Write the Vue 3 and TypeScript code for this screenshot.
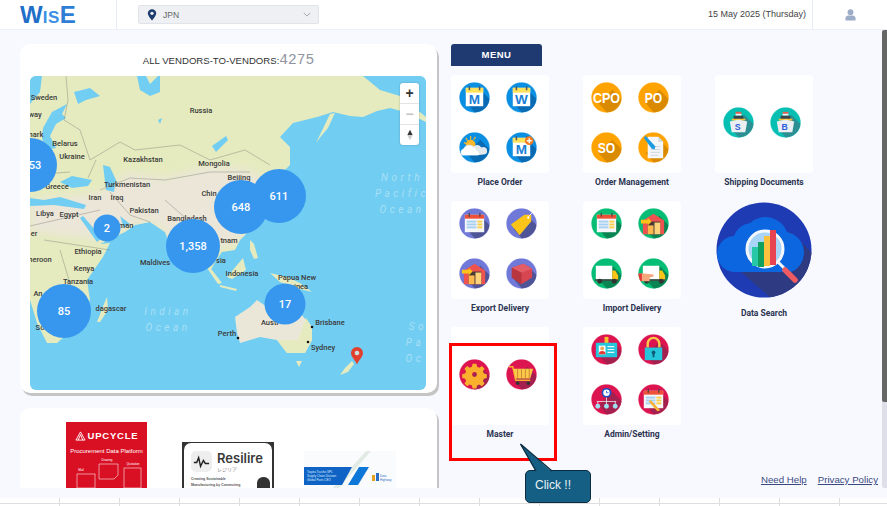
<script setup lang="ts">
interface MenuIcon {
  kind: string
  bg: string
  shade: string
  text?: string
}
interface MenuGroup {
  label: string
  icons: MenuIcon[]
  big?: boolean
}

const blue = { bg: '#0b8fe3', shade: '#0a6bb5' }
const orange = { bg: '#ffa300', shade: '#d98a00' }
const purple = { bg: '#7078d8', shade: '#4f5496' }
const green = { bg: '#05bd74', shade: '#0a8452' }
const crimson = { bg: '#dc1450', shade: '#a3204f' }
const teal = { bg: '#06bfb3', shade: '#2b8f93' }

// row by row, same order as the page
const menuGroups: MenuGroup[] = [
  {
    label: 'Place Order',
    icons: [
      { kind: 'cal', text: 'M', ...blue },
      { kind: 'cal', text: 'W', ...blue },
      { kind: 'weather', ...blue },
      { kind: 'calplus', text: 'M', ...blue }
    ]
  },
  {
    label: 'Order Management',
    icons: [
      { kind: 'badge', text: 'CPO', ...orange },
      { kind: 'badge', text: 'PO', ...orange },
      { kind: 'badge', text: 'SO', ...orange },
      { kind: 'doc', ...orange }
    ]
  },
  {
    label: 'Shipping Documents',
    icons: [
      { kind: 'ship', text: 'S', ...teal },
      { kind: 'ship', text: 'B', ...teal }
    ]
  },
  {
    label: 'Export Delivery',
    icons: [
      { kind: 'grid', ...purple },
      { kind: 'tag', ...purple },
      { kind: 'house', ...purple },
      { kind: 'box', ...purple }
    ]
  },
  {
    label: 'Import Delivery',
    icons: [
      { kind: 'grid', ...green },
      { kind: 'house', ...green },
      { kind: 'truck', ...green },
      { kind: 'hand', ...green }
    ]
  },
  { label: 'Data Search', icons: [], big: true },
  {
    label: 'Master',
    icons: [
      { kind: 'gear', ...crimson },
      { kind: 'cart', ...crimson }
    ]
  },
  {
    label: 'Admin/Setting',
    icons: [
      { kind: 'card', ...crimson },
      { kind: 'lock', ...crimson },
      { kind: 'org', ...crimson },
      { kind: 'calpen', ...crimson }
    ]
  }
]

const clusters = [
  { x: 30, y: 165, r: 27, n: '353' },
  { x: 107, y: 228, r: 13.5, n: '2' },
  { x: 193, y: 246, r: 27, n: '1,358' },
  { x: 241, y: 207, r: 27, n: '648' },
  { x: 279, y: 196, r: 27, n: '611' },
  { x: 64, y: 311, r: 27, n: '85' },
  { x: 285, y: 304, r: 20.5, n: '17' }
]

const places = [
  { x: 44, y: 100, t: 'Sweden' },
  { x: 35, y: 117, t: 'way' },
  { x: 36, y: 137, t: 'nark' },
  { x: 201, y: 113, t: 'Russia' },
  { x: 65, y: 146, t: 'Belarus' },
  { x: 72, y: 159, t: 'Ukraine' },
  { x: 143, y: 162, t: 'Kazakhstan' },
  { x: 214, y: 166, t: 'Mongolia' },
  { x: 239, y: 180, t: 'Beijing' },
  { x: 127, y: 187, t: 'Turkmenistan' },
  { x: 57, y: 189, t: 'Greece' },
  { x: 95, y: 200, t: 'Iran' },
  { x: 117, y: 200, t: 'Iraq' },
  { x: 209, y: 196, t: 'Chin' },
  { x: 144, y: 213, t: 'Pakistan' },
  { x: 187, y: 221, t: 'Bangladesh' },
  { x: 45, y: 216, t: 'Libya' },
  { x: 69, y: 217, t: 'Egypt' },
  { x: 126, y: 228, t: 'man' },
  { x: 34, y: 236, t: 'er' },
  { x: 229, y: 243, t: 'tnam' },
  { x: 88, y: 254, t: 'Ethiopia' },
  { x: 40, y: 262, t: 'neroon' },
  { x: 221, y: 263, t: 'sia' },
  { x: 84, y: 271, t: 'Kenya' },
  { x: 78, y: 284, t: 'Tanzania' },
  { x: 155, y: 265, t: 'Maldives' },
  { x: 242, y: 276, t: 'Indonesia' },
  { x: 297, y: 280, t: 'Papua New' },
  { x: 299, y: 289, t: 'uinea' },
  { x: 38, y: 296, t: 'An' },
  { x: 111, y: 311, t: 'dagascar' },
  { x: 40, y: 330, t: 'So' },
  { x: 227, y: 336, t: 'Perth' },
  { x: 270, y: 325, t: 'Austr' },
  { x: 330, y: 325, t: 'Brisbane' },
  { x: 323, y: 350, t: 'Sydney' }
]

const oceanLabels = [
  { x: 402, y: 181, t: 'North' },
  { x: 402, y: 197, t: 'Pacific' },
  { x: 402, y: 213, t: 'Ocean' },
  { x: 168, y: 315, t: 'Indian' },
  { x: 168, y: 331, t: 'Ocean' },
  { x: 418, y: 330, t: 'So' },
  { x: 415, y: 346, t: 'Pa' },
  { x: 415, y: 362, t: 'Oc' }
]

const landPath =
  'M30 76H363L380 90L400 96L426 117V122L405 112L390 108L377 111L363 117L350 116L333 112L317 117L293 123L280 137L290 147L290 165L283 172L275 185L262 205L255 225L240 240L235 250L222 252L215 262L210 272L205 262L207 235L195 230L190 250L180 262L172 250L165 232L150 222L135 225L125 232L100 244L110 243L103 257L87 280L90 300L80 323L57 343L47 343L37 323L30 300Z'
</script>

<template>
  <div class="page">
    <svg class="defs" width="0" height="0" aria-hidden="true">
      <defs>
        <clipPath id="disc"><circle cx="16" cy="16" r="15.5" /></clipPath>
        <clipPath id="bigdisc"><circle cx="48" cy="48" r="47.5" /></clipPath>
        <clipPath id="landclip"><path :d="landPath" /></clipPath>
        <filter id="soft"><feGaussianBlur stdDeviation="5" /></filter>
      </defs>
    </svg>

    <header class="topbar">
      <div class="brand"><span class="brand-w">W</span><span class="brand-i">is</span><span class="brand-e">E</span></div>
      <div class="country">
        <svg class="pin" viewBox="0 0 12 14" width="10" height="12">
          <path d="M6 0a5 5 0 0 0-5 5c0 3.500 5 8.500 5 8.500s5-5 5-8.500a5 5 0 0 0-5-5z" fill="#1c3a6b" />
          <circle cx="6" cy="5" r="2" fill="#eef0f4" />
        </svg>
        <span>JPN</span>
        <svg class="chev" viewBox="0 0 10 6" width="8" height="5">
          <path d="M1 1l4 4 4-4" fill="none" stroke="#8b93a3" stroke-width="1" />
        </svg>
      </div>
      <div class="date">15 May 2025 (Thursday)</div>
      <div class="user">
        <svg viewBox="0 0 12 13" width="11" height="12">
          <circle cx="6" cy="3.400" r="3.200" fill="#9dadc8" />
          <path d="M0.500 12.500v-2.500c0-2 2-3 3-3h5c1 0 3 1 3 3v2.500z" fill="#9dadc8" />
        </svg>
      </div>
    </header>

    <main class="body">
      <section class="left">
        <div class="card map-card">
          <h2 class="map-title">ALL VENDORS-TO-VENDORS:<span class="count">4275</span></h2>
          <div class="map">
            <svg class="map-svg" viewBox="30 76 396 314" width="396" height="314">
              <rect x="30" y="76" width="396" height="314" fill="#72cdf2" />
              <!-- land -->
              <path fill="#e5ebbe" :d="landPath" />
              <g clip-path="url(#landclip)">
                <path fill="#ebe6d8" filter="url(#soft)" d="M30 200L100 192L130 172L165 178L210 165L250 170L275 188L262 205L255 225L240 240L222 250L207 235L195 230L172 250L165 232L150 222L135 225L100 240L30 232Z" />
              </g>
              <path fill="#ebe7d8" d="M235 317L250 307L257 300L267 307L300 313L312 327L312 340L305 353L287 353L277 340L260 337L240 343L237 333Z" />
              <path fill="#e5ebbe" d="M277 340L287 353L305 353L312 340L312 327L306 318L298 340Z" />
              <path fill="#e5ebbe" d="M97 322L104 304L107 297L108 310L100 322ZM340 375L345 368L352 361L354 364L348 372ZM296 361L302 361L299 367ZM207 268L212 270L222 283L218 284ZM227 277L243 258L246 270L232 279ZM220 285L237 289L236 291L220 287ZM270 273L287 277L300 283L312 292L296 288L280 282ZM250 240L254 244L258 258L254 259L250 250ZM316 143L330 114L335 113L328 128L322 135Z" />
              <!-- seas and lakes -->
              <path fill="#72cdf2" d="M30 76H42L40 92L30 104ZM43 128L52 112L67 104L62 114L66 118L56 124L50 136L56 148L46 150L42 138ZM74 92L90 88L100 96L86 100L78 104ZM137 76H146L150 84L158 76H160L160 92L150 96L140 90ZM60 182L72 176L92 180L88 186L72 188ZM103 165L110 167L116 180L114 192L106 190ZM30 198L44 200L60 197L86 205L84 209L54 205L30 206ZM97 242L80 218L83 216L102 238ZM120 216L130 224L124 228ZM212 146L226 136L228 140L216 152ZM158 120L162 118L160 124Z" />
              <path fill="none" stroke="#8e8e85" stroke-width="0.500" d="M66 76L68 100L64 120L80 130L90 160L120 142L135 150L180 145L210 160L245 150L270 165M100 190L130 178L165 180L210 172L250 172M96 160L88 178M30 175L70 172M30 226L100 210M44 240L110 250M60 250L72 290M110 192L130 215L150 222M165 200L190 222" />
              <!-- places -->
              <text v-for="p in places" :key="p.t + p.y" class="place" :x="p.x" :y="p.y" text-anchor="middle">{{ p.t }}</text>
              <text v-for="o in oceanLabels" :key="o.t + o.y" class="ocean" :x="o.x" :y="o.y" text-anchor="middle">{{ o.t }}</text>
              <circle cx="312" cy="327" r="1.300" fill="#111" />
              <circle cx="308" cy="342" r="1.300" fill="#111" />
              <circle cx="238" cy="338" r="1.300" fill="#111" />
              <!-- clusters -->
              <g v-for="c in clusters" :key="c.n">
                <circle :cx="c.x" :cy="c.y" :r="c.r" fill="#3797ee" />
                <text class="cluster" :x="c.x + (c.n === '353' ? 2 : 0)" :y="c.y + 4" text-anchor="middle">{{ c.n }}</text>
              </g>
              <path d="M357 347a6 6 0 0 0-6 6c0 3.500 4 7 6 11.500c2-4.500 6-8 6-11.500a6 6 0 0 0-6-6z" fill="#e2402f" />
              <circle cx="357" cy="353" r="2.300" fill="#cfe0dc" />
            </svg>
            <div class="zoom-ctl">
              <div class="zoom-btn plus">+</div>
              <div class="zoom-btn minus">−</div>
              <div class="zoom-btn compass">
                <svg viewBox="0 0 8 14" width="6" height="12">
                  <path d="M4 0L7.500 7H0.500z" fill="#333" />
                  <path d="M4 14L7.500 7H0.500z" fill="#ccc" />
                </svg>
              </div>
            </div>
          </div>
        </div>

        <div class="card ads">
          <div class="ad ad-upcycle">
            <div class="up-title">
              <svg viewBox="0 0 12 11" width="11" height="10">
                <path d="M6 1L11 10H1Z M6 4L3.500 10M6 4L8.500 10" fill="none" stroke="#fff" stroke-width="1" />
              </svg>
              UPCYCLE
            </div>
            <div class="up-sub">Procurement Data Platform</div>
            <svg class="up-art" viewBox="0 0 81 30" width="81" height="30">
              <g fill="none" stroke="#f6c9cd" stroke-width="0.700">
                <path d="M33 6H52V17L48 21H33Z" />
                <rect x="58" y="10" width="17" height="20" />
                <rect x="11" y="16" width="18" height="14" />
              </g>
              <text x="41" y="3" class="up-tiny" text-anchor="middle">Drawing</text>
              <text x="67" y="7" class="up-tiny" text-anchor="middle">Quotation</text>
              <text x="15" y="13" class="up-tiny" text-anchor="middle">Mail</text>
            </svg>
          </div>
          <div class="ad ad-resilire">
            <div class="res-inner">
              <div class="res-head">
                <svg class="res-mark" viewBox="0 0 22 22" width="21" height="21">
                  <rect width="22" height="22" rx="5" fill="#eee" />
                  <path d="M3 12l3 0 2-5 2 9 3-6 2 3 4 0" fill="none" stroke="#222" stroke-width="1.500" />
                </svg>
                <div>
                  <div class="res-name">Resilire</div>
                  <div class="res-jp">レジリア</div>
                </div>
              </div>
              <div class="res-copy">Creating Sustainable<br />Manufacturing by Connecting</div>
              <span class="res-dot"></span>
            </div>
          </div>
          <div class="ad ad-third">
            <svg viewBox="0 0 92 37" width="92" height="37">
              <rect width="92" height="37" fill="#fafbfd" />
              <path d="M29 37L62 0H67L35 37Z" fill="#e3ebe6" />
              <path d="M0 16H48L38 34H0Z" fill="#0e63c4" />
              <path d="M55 16H65L54 34H44Z" fill="#0e78d8" />
              <text x="3" y="22" class="third-tiny">Toyota Tsusho SPL</text>
              <text x="3" y="26" class="third-tiny">Supply Chain Division</text>
              <text x="3" y="30" class="third-tiny">Global Parts CEO</text>
              <rect x="68" y="24" width="3" height="6" fill="#e8a020" />
              <rect x="72" y="22" width="3" height="8" fill="#2a70c8" />
              <text x="76" y="26" class="third-brand">Data</text>
              <text x="76" y="30" class="third-brand">Highway</text>
            </svg>
          </div>
        </div>
      </section>

      <section class="right">
        <div class="menu-btn">MENU</div>
        <div class="menu-grid">
          <div v-for="g in menuGroups" :key="g.label" class="group" :class="{ 'group-search': g.big }">
            <div v-if="!g.big" class="tile">
              <svg v-for="(ic, i) in g.icons" :key="i" class="icon" viewBox="0 0 32 32" width="31" height="31">
                <circle cx="16" cy="16" r="16" :fill="ic.bg" opacity="0.180" />
                <circle cx="16" cy="16" r="15.500" :fill="ic.bg" />
                <g clip-path="url(#disc)">
                  <path d="M8 22L22 8L40 26V40H24Z" :fill="ic.shade" />

                  <template v-if="ic.kind === 'cal' || ic.kind === 'calplus'">
                    <rect x="7" y="6" width="18" height="19" fill="#fff" />
                    <rect x="7" y="6" width="18" height="5" fill="#ffe15c" />
                    <rect x="10" y="4.500" width="1.500" height="4" fill="#555" />
                    <rect x="20.500" y="4.500" width="1.500" height="4" fill="#555" />
                    <text x="16" y="23" class="cal-letter" text-anchor="middle">{{ ic.text }}</text>
                    <template v-if="ic.kind === 'calplus'">
                      <circle cx="24" cy="9" r="4.500" fill="#f47b20" />
                      <path d="M24 6.500v5M21.500 9h5" stroke="#fff" stroke-width="1.400" />
                    </template>
                  </template>

                  <template v-else-if="ic.kind === 'weather'">
                    <circle cx="12" cy="13" r="5" fill="#fcb72b" />
                    <path d="M5 11l3 1M7 6l2 3M12 4v4M17 5l-2 3" stroke="#fcb72b" stroke-width="1.200" />
                    <path d="M3 24a4 4 0 0 1 2-7a6 6 0 0 1 10-2a5 5 0 0 1 8 1a4 4 0 0 1 6 4a3 3 0 0 1-2 3l-8 1z" fill="#e4e9ed" />
                    <path d="M3 24a4 4 0 0 1 1-6a8 8 0 0 1 14 1a4 4 0 0 1 2 5z" fill="#fff" />
                  </template>

                  <text v-else-if="ic.kind === 'badge'" x="16" y="22" class="badge-text" text-anchor="middle" :textLength="ic.text === 'CPO' ? 28 : 18" lengthAdjust="spacingAndGlyphs">{{ ic.text }}</text>

                  <template v-else-if="ic.kind === 'doc'">
                    <path d="M10 5H21L26 10V27H10Z" fill="#f4f6f8" />
                    <path d="M21 5L26 10H21Z" fill="#cfd6dc" />
                    <path d="M13 15h10M13 18h10M13 21h10M13 24h8" stroke="#c5cdd4" stroke-width="0.800" />
                    <path d="M6 6L8 4L18 15L17 18L14 17Z" fill="#1d9be0" />
                  </template>

                  <template v-else-if="ic.kind === 'ship'">
                    <rect x="13" y="5" width="6" height="2" fill="#e65b50" />
                    <rect x="13" y="7" width="6" height="2" fill="#f5f5f5" />
                    <rect x="11" y="9" width="10" height="4" fill="#37474f" />
                    <path d="M9 12H23V14H9z" fill="#fbc02d" />
                    <path d="M7 15L16 13L25 15L23 26H9Z" fill="#eceff1" />
                    <text x="15" y="23.500" class="ship-letter" text-anchor="middle">{{ ic.text }}</text>
                  </template>

                  <template v-else-if="ic.kind === 'grid' || ic.kind === 'calpen'">
                    <rect x="6" y="7" width="20" height="18" fill="#f4f6fa" />
                    <rect x="6" y="7" width="20" height="4" fill="#ee5138" />
                    <rect x="10" y="5" width="1.200" height="4" fill="#444" />
                    <rect x="21" y="5" width="1.200" height="4" fill="#444" />
                    <g fill="#a8d0f0">
                      <rect x="8" y="13" width="10" height="2" />
                      <rect x="8" y="16" width="10" height="2" />
                      <rect x="8" y="19" width="10" height="2" />
                    </g>
                    <g fill="#fdd04a">
                      <rect x="19" y="13" width="5" height="2" />
                      <rect x="19" y="16" width="5" height="2" />
                      <rect x="19" y="19" width="5" height="2" />
                    </g>
                    <path v-if="ic.kind === 'calpen'" d="M11 18L13 16.500L23 27L20 28Z" fill="#f9b233" />
                  </template>

                  <template v-else-if="ic.kind === 'tag'">
                    <path d="M5 17L19 7L26 7L26 14L14 28Z" fill="#fcc419" />
                    <path d="M23 9L28 4" stroke="#fff" stroke-width="0.800" />
                    <circle cx="23" cy="10" r="1.200" fill="#fff" />
                  </template>

                  <template v-else-if="ic.kind === 'house'">
                    <path d="M5 13L16 6L27 13V27H5Z" fill="#ef5350" />
                    <rect x="10" y="14" width="13" height="13" fill="#4a3a36" />
                    <rect x="10" y="18" width="6" height="9" fill="#fdb94d" />
                    <rect x="17" y="15" width="6" height="12" fill="#fcd27a" />
                    <path d="M3 12H10V10L14 14L10 18V16H3Z" fill="#fcc419" />
                  </template>

                  <template v-else-if="ic.kind === 'box'">
                    <path d="M6 10L18 6L27 11V20L16 27L6 20Z" fill="#d64550" />
                    <path d="M6 10L16 15V27L6 20Z" fill="#b8363f" />
                    <path d="M16 15L27 11L18 6L6 10Z" fill="#e35d67" />
                  </template>

                  <template v-else-if="ic.kind === 'truck' || ic.kind === 'hand'">
                    <rect x="5" y="8" width="17" height="14" fill="#fff" />
                    <path d="M22 13H25L28 18V23H22Z" fill="#fcc419" />
                    <rect x="4" y="22" width="24" height="1.500" fill="#444" />
                    <circle cx="9" cy="24" r="2.500" fill="#333" />
                    <circle cx="24" cy="24" r="2.500" fill="#333" />
                    <path v-if="ic.kind === 'hand'" d="M0 16H6L16 17V19L12 20V24H3L0 24Z" fill="#f7a77c" />
                    <rect v-if="ic.kind === 'hand'" x="0" y="16" width="4" height="8" fill="#e53935" />
                  </template>

                  <path v-else-if="ic.kind === 'gear'" fill-rule="evenodd" d="M14 5h4l.7 3 2.300 1 2.600-1.700 2.800 2.800-1.700 2.600 1 2.300 3 .7v4l-3 .7-1 2.300 1.700 2.600-2.800 2.800-2.600-1.700-2.300 1-.7 3h-4l-.7-3-2.300-1-2.600 1.700-2.800-2.800 1.700-2.600-1-2.300-3-.7v-4l3-.7 1-2.300-1.700-2.600 2.800-2.800 2.600 1.700 2.300-1zM16 13.500a2.500 2.500 0 1 0 0 5 2.500 2.500 0 0 0 0-5z" fill="#fbb02d" />

                  <template v-else-if="ic.kind === 'cart'">
                    <path d="M3 8H7L10 22H25" fill="none" stroke="#fbb02d" stroke-width="1.500" />
                    <path d="M7.500 10H28L25 20H10Z" fill="#fbc94a" />
                    <path d="M12 10V20M16 10V20M20 10V20M24 10V20" stroke="#c9772b" stroke-width="0.800" />
                    <circle cx="12" cy="25" r="1.800" fill="#333" />
                    <circle cx="23" cy="25" r="1.800" fill="#333" />
                  </template>

                  <template v-else-if="ic.kind === 'card'">
                    <rect x="14" y="3" width="4" height="7" fill="#fbc02d" />
                    <rect x="5" y="9" width="22" height="15" rx="1" fill="#26c6da" />
                    <rect x="8" y="12" width="7" height="9" fill="#fff" />
                    <circle cx="11.500" cy="15" r="2" fill="#f2a65a" />
                    <path d="M8 21a3.500 3.500 0 0 1 7 0z" fill="#e53935" />
                    <path d="M17 13h7M17 16h7M17 19h7" stroke="#e8f7fa" stroke-width="1.200" />
                  </template>

                  <template v-else-if="ic.kind === 'lock'">
                    <path d="M10 14V10a6 6 0 0 1 12 0v4" fill="none" stroke="#fbc94a" stroke-width="2.500" />
                    <rect x="7" y="14" width="18" height="13" fill="#26c6da" />
                    <circle cx="16" cy="19" r="2" fill="#0f5d78" />
                    <rect x="15" y="20" width="2" height="4" fill="#0f5d78" />
                  </template>

                  <template v-else-if="ic.kind === 'org'">
                    <circle cx="16" cy="9" r="5" fill="#1e4fc2" />
                    <circle cx="16" cy="9" r="3.300" fill="#fff" />
                    <path d="M16 9v-2M16 9h2" stroke="#1e4fc2" stroke-width="0.800" />
                    <path d="M16 14v4M6 18h20M7 18v3M16 18v3M25 18v3" fill="none" stroke="#f4f6f8" stroke-width="0.800" />
                    <circle cx="7" cy="23" r="2.500" fill="#9de0ef" />
                    <circle cx="16" cy="23" r="2.500" fill="#9de0ef" />
                    <circle cx="25" cy="23" r="2.500" fill="#9de0ef" />
                  </template>
                </g>
              </svg>
            </div>
            <svg v-else class="search-icon" viewBox="0 0 96 96" width="96" height="96">
              <circle cx="48" cy="48" r="47.500" fill="#1f3bb3" />
              <g clip-path="url(#bigdisc)">
                <path d="M25 70L75 30L100 55V96H55Z" fill="#2e3a82" />
                <path d="M20 70a18 18 0 0 1-2-36a20 20 0 0 1 16-13a23 23 0 0 1 37 9a21 21 0 0 1 4 40Z" fill="#0b66e0" />
                <circle cx="49" cy="47" r="18" fill="#a8d4f8" stroke="#f4f8fc" stroke-width="3" />
                <rect x="36" y="45" width="6" height="19" fill="#27c8a8" />
                <rect x="42" y="40" width="6" height="25" fill="#12a060" />
                <rect x="48" y="34" width="6" height="30" fill="#fcc23e" />
                <rect x="54" y="28" width="6" height="35" fill="#e84350" />
                <path d="M62 60L68 66" stroke="#f4f8fc" stroke-width="3" />
                <path d="M69 68L79 78" stroke="#ee5b60" stroke-width="5.500" stroke-linecap="round" />
              </g>
            </svg>
            <div class="group-label">{{ g.label }}</div>
          </div>
        </div>
        <div class="links">
          <a>Need Help</a>
          <a>Privacy Policy</a>
        </div>
      </section>

      <div class="scrollbar"><div class="thumb"></div></div>
    </main>

    <div class="sheet"></div>

    <!-- tutorial overlay -->
    <div class="highlight"></div>
    <div class="callout">Click !!</div>
    <svg class="callout-tail" viewBox="0 0 40 32" width="40" height="32">
      <path d="M0.500 1L16 29H32Z" fill="#155f84" />
      <path d="M16 28L0.500 1L32 28" fill="none" stroke="#0c2d40" stroke-width="1.300" />
    </svg>
  </div>
</template>

<style>
html,
body {
  margin: 0;
  background: #f8f9ff;
}
</style>

<style scoped>
.page {
  position: relative;
  width: 887px;
  height: 506px;
  overflow: hidden;
  display: flex;
  flex-direction: column;
  background: #f8f9ff;
  font-family: 'Liberation Sans', Arial, sans-serif;
  color: #333;
}

.defs {
  position: absolute;
}

.topbar {
  height: 29px;
  flex: none;
  display: flex;
  align-items: center;
  background: #fff;
  border-bottom: 1px solid #edf0f8;
}

.brand {
  width: 117px;
  height: 29px;
  box-sizing: border-box;
  padding-left: 20px;
  border-right: 1px solid #e6ebf5;
  font: 700 24px/30px 'Liberation Sans', sans-serif;
  color: #2f80d8;
  white-space: nowrap;
}

.brand-w {
  color: #1f6fc9;
}

.brand-i {
  color: #3b8fe4;
  font-variant-caps: small-caps;
  letter-spacing: 0.500px;
}

.brand-e {
  color: #2f7ed6;
}

.country {
  margin-left: 21px;
  width: 181px;
  height: 19px;
  box-sizing: border-box;
  padding: 0 7px 0 8px;
  display: flex;
  align-items: center;
  background: #eef0f4;
  border: 1px solid #e0e3ea;
  border-radius: 2px;
  font-size: 8.500px;
  color: #666;
}

.pin {
  margin-right: 6px;
}

.chev {
  margin-left: auto;
}

.date {
  margin-left: auto;
  width: 104px;
  height: 29px;
  line-height: 29px;
  font-size: 9px;
  color: #444;
  border-right: 1px solid #e6ebf5;
}

.user {
  width: 74px;
  display: flex;
  justify-content: center;
}

.body {
  height: 458px;
  flex: none;
  display: flex;
  overflow: hidden;
}

.left {
  width: 418px;
  margin-left: 20px;
  padding-top: 14px;
  display: flex;
  flex-direction: column;
  gap: 15px;
  flex: none;
}

.card {
  flex: none;
  background: #fff;
  border-radius: 10px;
  box-shadow: 2px 3px 0 #c4c4c4;
  width: 417px;
  box-sizing: border-box;
}

.map-card {
  height: 349px;
  padding: 8px 10px 0;
}

.map-title {
  margin: 0 0 8px;
  height: 16px;
  font-size: 9.600px;
  line-height: 16px;
  font-weight: 400;
  text-align: center;
  color: #333;
}

.count {
  font-family: 'Liberation Mono', monospace;
  font-size: 14.500px;
  color: #8f949e;
}

.map {
  position: relative;
  width: 396px;
  height: 314px;
  border-radius: 6px;
  overflow: hidden;
}

.map-svg {
  display: block;
}

.place {
  font: 500 7.500px Roboto, sans-serif;
  fill: #3a3a3a;
}

.ocean {
  font: italic 400 10px Roboto, sans-serif;
  letter-spacing: 3.500px;
  fill: #a8e0f6;
}

.cluster {
  font: 500 11px Roboto, sans-serif;
  fill: #fff;
}

.zoom-ctl {
  position: absolute;
  top: 7px;
  right: 7px;
  width: 19px;
  background: #fff;
  border-radius: 3px;
  box-shadow: 0 0 2px rgba(0, 0, 0, 0.25);
}

.zoom-btn {
  height: 20px;
  display: flex;
  align-items: center;
  justify-content: center;
  font: 700 14px/20px 'Liberation Sans', sans-serif;
  color: #333;
  border-bottom: 1px solid #e4e4e4;
}

.minus {
  color: #c4c4c4;
}

.compass {
  border-bottom: 0;
}

.ads {
  height: 100px;
  display: flex;
  align-items: flex-start;
}

.ad {
  position: relative;
  overflow: hidden;
  flex: none;
}

.ad-upcycle {
  width: 81px;
  height: 66px;
  margin: 14px 0 0 46px;
  background: #d91023;
  color: #fff;
  text-align: center;
}

.up-title {
  margin-top: 8px;
  display: flex;
  align-items: center;
  justify-content: center;
  gap: 2px;
  font: 600 9.500px/11px 'Liberation Sans', sans-serif;
  letter-spacing: 0.800px;
}

.up-sub {
  margin-top: 7px;
  margin-bottom: 3px;
  font: 400 6px/7px 'Liberation Sans', sans-serif;
}

.up-art {
  display: block;
}

.up-tiny {
  font: 400 3px 'Liberation Sans', sans-serif;
  fill: #fff;
}

.ad-resilire {
  width: 92px;
  height: 46px;
  margin: 34px 0 0 35px;
  background: #333;
  padding: 1px 2px 0;
  box-sizing: border-box;
}

.res-inner {
  position: relative;
  background: #fff;
  height: 60px;
  border-radius: 7px 7px 0 0;
  padding: 8px 0 0 7px;
  box-sizing: border-box;
}

.res-head {
  display: flex;
  gap: 5px;
}

.res-name {
  font: 600 13px/14px Inter, sans-serif;
  color: #3a3a3a;
}

.res-jp {
  font: 400 5px/7px 'Noto Sans CJK JP', sans-serif;
  color: #888;
}

.res-copy {
  margin-top: 4px;
  font: 700 3.500px/6px 'Liberation Sans', sans-serif;
  color: #555;
}

.res-dot {
  position: absolute;
  left: 73px;
  top: 34px;
  width: 13px;
  height: 18px;
  border-radius: 6px;
  background: #333;
}

.ad-third {
  width: 92px;
  height: 37px;
  margin: 43px 0 0 30px;
}

.ad-third svg {
  display: block;
}

.third-tiny {
  font: 400 3px 'Liberation Sans', sans-serif;
  fill: #dfeeff;
}

.third-brand {
  font: 400 3px 'Liberation Sans', sans-serif;
  fill: #2a70c8;
}

.right {
  flex: 1;
  margin-left: 13px;
  padding-top: 14px;
  display: flex;
  flex-direction: column;
}

.menu-btn {
  width: 91px;
  height: 22px;
  line-height: 22px;
  background: #1f3a70;
  border-radius: 3px 3px 0 0;
  text-align: center;
  font-size: 9.500px;
  font-weight: 700;
  letter-spacing: 0.500px;
  color: #fff;
}

.menu-grid {
  margin-top: 9px;
  display: grid;
  grid-template-columns: repeat(3, 98px);
  grid-auto-rows: 126px;
  column-gap: 34px;
}

.group {
  display: flex;
  flex-direction: column;
  align-items: center;
}

.tile {
  width: 98px;
  height: 98px;
  box-sizing: border-box;
  padding: 0 0 4px 8px;
  background: #fff;
  border-radius: 4px;
  display: grid;
  grid-template-columns: 31px 31px;
  grid-auto-rows: 31px;
  justify-content: start;
  align-content: center;
  column-gap: 16px;
  row-gap: 19px;
}

.icon {
  display: block;
}

.search-icon {
  display: block;
  margin-top: 1px;
}

.group-label {
  margin-top: 4px;
  height: 11px;
  font: 700 8.500px/11px Roboto, 'Liberation Sans', sans-serif;
  color: #2b3350;
  white-space: nowrap;
}

.group-search .group-label {
  margin-top: 10px;
}

.cal-letter {
  font: 700 14px 'Liberation Sans', sans-serif;
  fill: #1a7fd6;
}

.badge-text {
  font: 700 16px 'Liberation Sans', sans-serif;
  fill: #fff;
}

.ship-letter {
  font: 700 9px 'Liberation Sans', sans-serif;
  fill: #2a5cdb;
}

.links {
  margin-top: auto;
  margin-bottom: 2px;
  padding-right: 4px;
  display: flex;
  justify-content: flex-end;
  gap: 11px;
  font-size: 9.700px;
  line-height: 12px;
  color: #3a4a80;
}

.links a {
  text-decoration: underline;
}

.scrollbar {
  width: 5px;
  flex: none;
  background: #dde0e9;
  border-radius: 2px 0 0 2px;
}

.thumb {
  height: 372px;
  background: #666;
  border-radius: 2px 0 0 2px;
}

.sheet {
  margin-top: 10px;
  flex: 1;
  background-color: #fff;
  background-image:
    linear-gradient(#dedede, #dedede),
    repeating-linear-gradient(90deg, transparent 0 59px, #dedede 59px 60px);
  background-size: 100% 1px, 100% 100%;
  background-position: 0 5px, 0 0;
  background-repeat: no-repeat;
}

.highlight {
  position: absolute;
  left: 449px;
  top: 343px;
  width: 102px;
  height: 112px;
  border: 3px solid #f00;
  pointer-events: none;
}

.callout {
  position: absolute;
  left: 525px;
  top: 470px;
  width: 66px;
  height: 33px;
  box-sizing: border-box;
  padding-left: 9px;
  background: #155f84;
  border: 1.500px solid #0c2d40;
  border-radius: 5px;
  color: #e8f2f7;
  font-size: 12px;
  line-height: 29px;
}

.callout-tail {
  position: absolute;
  left: 520px;
  top: 443px;
}
</style>
